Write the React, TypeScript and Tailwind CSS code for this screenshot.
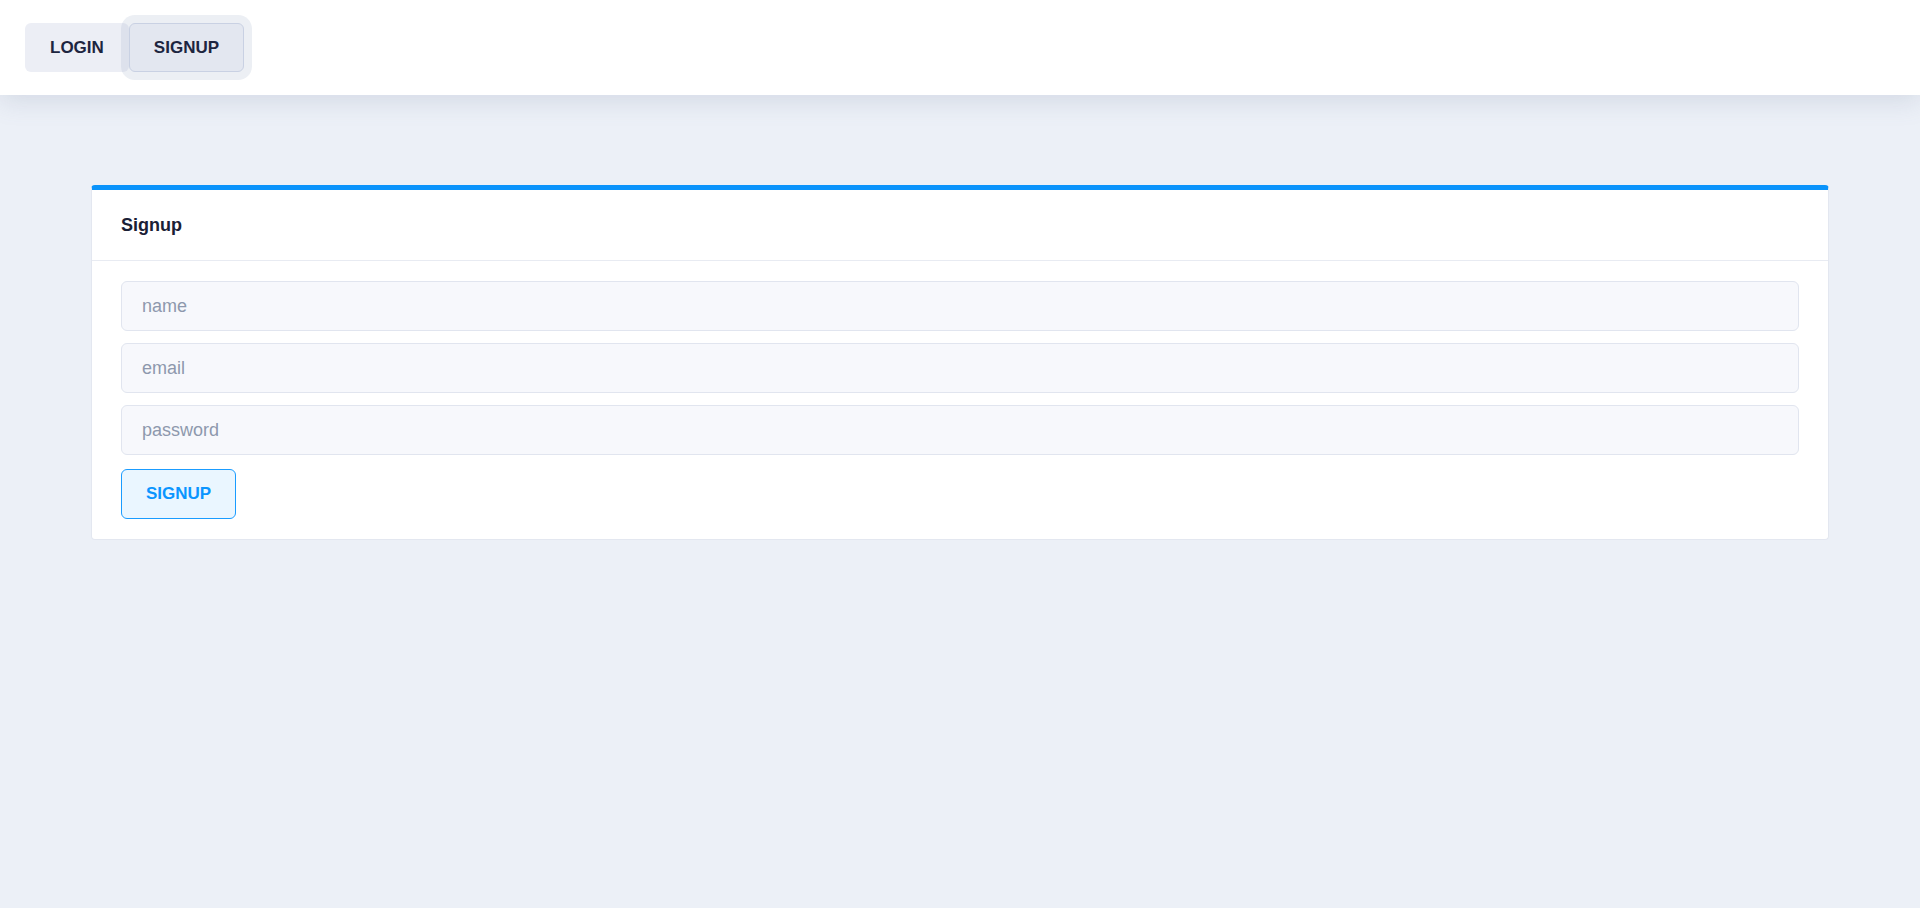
import { useState } from 'react'

const FONT = { fontFamily: '"Liberation Sans", Arial, sans-serif' }

function NavButton({ label, active }: { label: string; active?: boolean }) {
  return (
    <button
      className={
        'h-[49px] px-6 rounded-md text-[17px] font-bold text-[#1d2540] ' +
        (active
          ? 'bg-[#e3e7f0] border border-[#c9d1e3] ring-8 ring-[rgba(170,180,205,0.22)] relative z-10'
          : 'bg-[#eceef5] border border-transparent')
      }
    >
      {label}
    </button>
  )
}

function Field({ placeholder, type = 'text' }: { placeholder: string; type?: string }) {
  return (
    <input
      type={type}
      placeholder={placeholder}
      className="w-full h-[50px] px-5 rounded-md bg-[#f7f8fc] border border-[#e1e5ef] text-[18px] text-[#1d2540] placeholder:text-[#8e98ad] outline-none"
    />
  )
}

export default function App() {
  const [tab, setTab] = useState<'login' | 'signup'>('signup')

  return (
    <div className="min-h-[908px] bg-[#ecf0f7]" style={FONT}>
      <header className="h-[95px] bg-white shadow-[0_6px_24px_rgba(100,115,150,0.18)] flex items-start pt-[23px] pl-[25px]">
        <div className="flex" onClick={() => setTab(tab === 'login' ? 'signup' : 'login')}>
          <NavButton label="LOGIN" active={tab === 'login'} />
          <NavButton label="SIGNUP" active={tab === 'signup'} />
        </div>
      </header>

      <main className="px-[91px] pt-[90px]">
        <div className="bg-white border border-[#e3e7f0] border-t-[5px] border-t-[#0a93fb] rounded-[4px]">
          <div className="h-[71px] flex items-center pt-[1px] px-[29px] border-b border-[#e8ebf2]">
            <h2 className="text-[18px] font-bold text-[#1a2035]">Signup</h2>
          </div>
          <form className="px-[29px] pt-[20px] pb-[20px] flex flex-col gap-[12px]" onSubmit={e => e.preventDefault()}>
            <Field placeholder="name" />
            <Field placeholder="email" type="email" />
            <Field placeholder="password" type="password" />
            <div className="pt-[2px]">
              <button
                type="submit"
                className="h-[50px] px-6 rounded-md border border-[#1a9cff] bg-[#eaf6ff] text-[17px] font-bold text-[#0a95ff]"
              >
                SIGNUP
              </button>
            </div>
          </form>
        </div>
      </main>
    </div>
  )
}
